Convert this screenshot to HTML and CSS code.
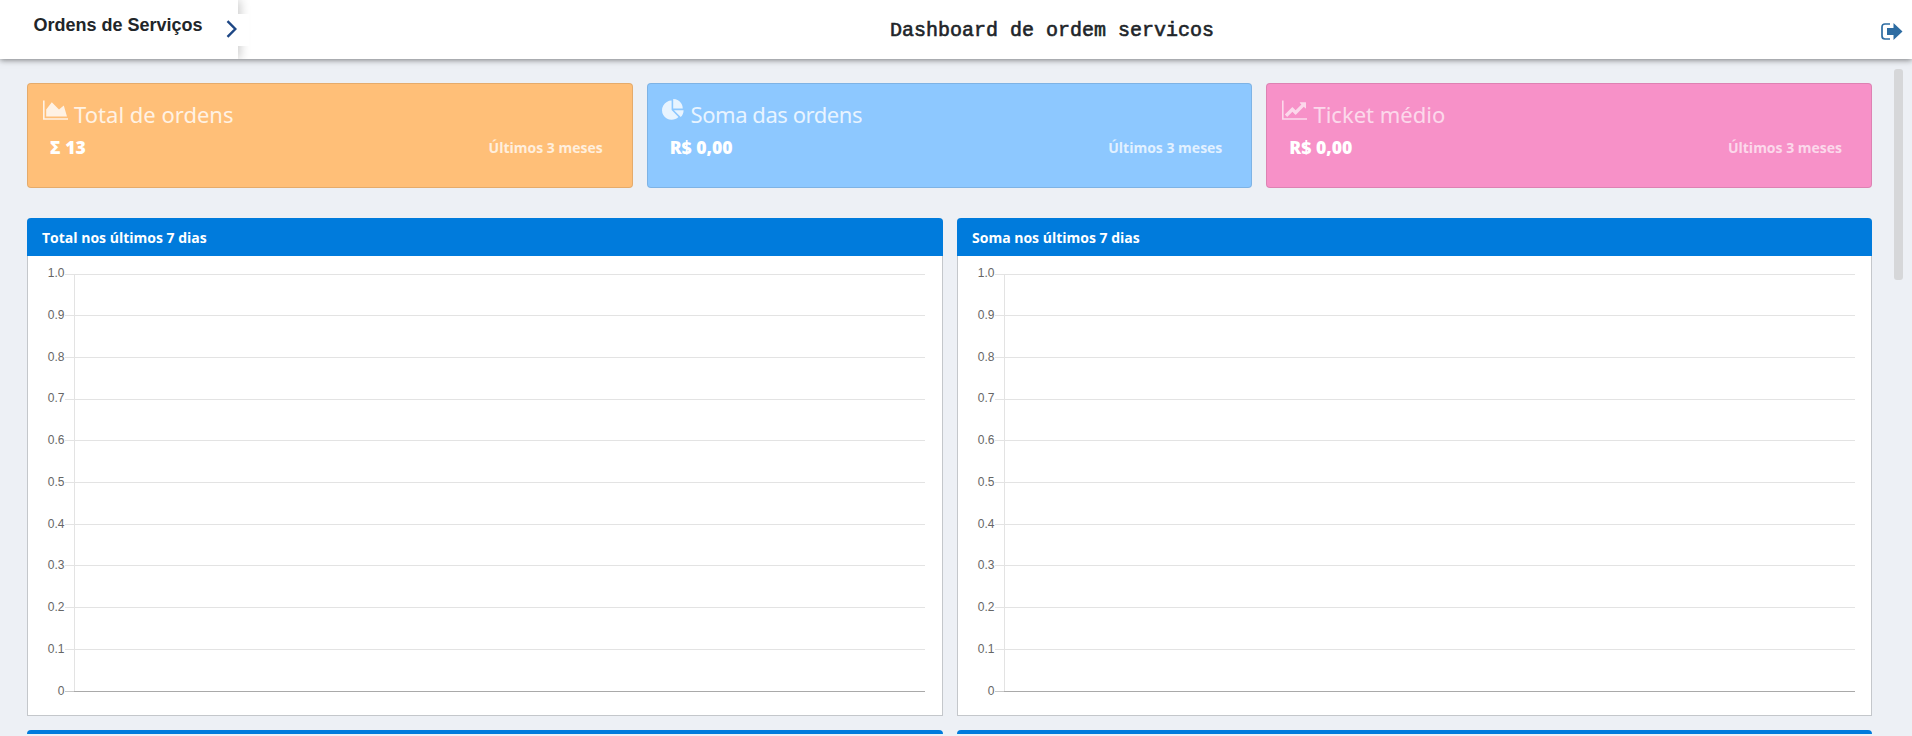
FILE: index.html
```
<!DOCTYPE html>
<html lang="pt-BR">
<head>
<meta charset="utf-8">
<title>Dashboard de ordem servicos</title>
<link rel="stylesheet" href="styles.css">
</head>
<body>
<header class="topbar">
  <div class="brand">Ordens de Serviços
    <span class="tab"><svg width="12" height="18" viewBox="0 0 12 18"><path d="M1.5 1.2L9.3 9L1.5 16.8"/></svg></span>
  </div>
  <h1 class="title">Dashboard de ordem servicos</h1>
  <svg class="logout" width="22" height="18" viewBox="0 0 22 18"><path class="door" d="M9 1H4Q1 1 1 4V13Q1 16 4 16H9"/><path class="arrow" d="M6 5H12.500V0L21.500 8.500L12.500 17V12H6Z"/></svg>
</header>
<main class="content">
  <section class="cards">
    <article class="card orange">
      <div class="head"><svg class="icon wide" viewBox="0 0 2048 1792"><path d="M2048 1536v128h-2048v-1536h128v1408h1920zm-384-1024l256 896h-1664v-576l448-576 576 576z"/></svg><h2 class="name">Total de ordens</h2></div>
      <div class="figures"><strong>Σ 13</strong><span>Últimos 3 meses</span></div>
    </article>
    <article class="card blue">
      <div class="head"><svg class="icon" viewBox="0 0 1792 1792"><path d="M768 890l546 546q-106 108-247.500 168t-298.500 60q-209 0-385.500-103t-279.500-279.500-103-385.500 103-385.500 279.500-279.500 385.500-103v762zm187 6h773q0 157-60 298.500t-168 247.500zm709-128h-768v-768q209 0 385.500 103t279.500 279.500 103 385.500z"/></svg><h2 class="name">Soma das ordens</h2></div>
      <div class="figures"><strong>R$ 0,00</strong><span>Últimos 3 meses</span></div>
    </article>
    <article class="card pink">
      <div class="head"><svg class="icon wide" viewBox="0 0 2048 1792"><path d="M2048 1536v128h-2048v-1536h128v1408h1920zm-128-1248v435q0 21-19.500 29.500t-35.500-7.500l-121-121-633 633q-10 10-23 10t-23-10l-233-233-416 416-192-192 585-585q10-10 23-10t23 10l233 233 464-464-121-121q-16-16-7.500-35.500t29.500-19.500h435q14 0 23 9t9 23z"/></svg><h2 class="name">Ticket médio</h2></div>
      <div class="figures"><strong>R$ 0,00</strong><span>Últimos 3 meses</span></div>
    </article>
  </section>
  <section class="panels">
    <article class="panel">
      <h3>Total nos últimos 7 dias</h3>
      <svg class="chart" width="914" height="459">
        <path class="grid" d="M37 18.500H897M37 59.500H897M37 101.500H897M37 143.500H897M37 184.500H897M37 226.500H897M37 268.500H897M37 309.500H897M37 351.500H897M37 393.500H897M46.500 19V435"/>
        <path class="tick" d="M37 435.500H46"/>
        <path class="base" d="M46 435.500H897"/>
        <g class="labels"><text x="36.500" y="21">1.0</text><text x="36.500" y="63">0.9</text><text x="36.500" y="105">0.8</text><text x="36.500" y="146">0.7</text><text x="36.500" y="188">0.6</text><text x="36.500" y="230">0.5</text><text x="36.500" y="272">0.4</text><text x="36.500" y="313">0.3</text><text x="36.500" y="355">0.2</text><text x="36.500" y="397">0.1</text><text x="36.500" y="439">0</text></g>
      </svg>
    </article>
    <article class="panel">
      <h3>Soma nos últimos 7 dias</h3>
      <svg class="chart" width="913" height="459">
        <path class="grid" d="M37 18.500H897M37 59.500H897M37 101.500H897M37 143.500H897M37 184.500H897M37 226.500H897M37 268.500H897M37 309.500H897M37 351.500H897M37 393.500H897M46.500 19V435"/>
        <path class="tick" d="M37 435.500H46"/>
        <path class="base" d="M46 435.500H897"/>
        <g class="labels"><text x="36.500" y="21">1.0</text><text x="36.500" y="63">0.9</text><text x="36.500" y="105">0.8</text><text x="36.500" y="146">0.7</text><text x="36.500" y="188">0.6</text><text x="36.500" y="230">0.5</text><text x="36.500" y="272">0.4</text><text x="36.500" y="313">0.3</text><text x="36.500" y="355">0.2</text><text x="36.500" y="397">0.1</text><text x="36.500" y="439">0</text></g>
      </svg>
    </article>
    <div class="next"></div>
    <div class="next"></div>
  </section>
  <div class="scroll"></div>
</main>
</body>
</html>
```
FILE: styles.css
```
* { box-sizing: border-box; }
body { margin: 0; height: 736px; overflow: hidden; background: #edf0f5; font-family: "Open Sans", sans-serif; }
h1, h2, h3 { margin: 0; }
svg { display: block; flex: none; }

.topbar { position: relative; z-index: 1; display: flex; align-items: flex-start; height: 59px; background: #fff; box-shadow: 0 1px 6px rgba(0, 0, 0, .5); }
.brand { position: relative; width: 238px; height: 59px; padding: 13px 0 0 33.5px; background: #fff; box-shadow: 2px 0 10px rgba(0, 0, 0, .22); clip-path: inset(0 -14px 0 0); font: bold 18px/24px "Liberation Sans", sans-serif; color: #212529; white-space: nowrap; }
.tab { position: absolute; left: 226px; top: 14px; width: 23px; height: 32px; padding: 6px 0 0 0; background: #fff; }
.tab path { fill: none; stroke: #1e4785; stroke-width: 2.4; }
.title { flex: 1; padding: 19px 0 0 652px; font: 400 20px/24px "Courier New", "Liberation Mono", monospace; -webkit-text-stroke: .6px #212529; color: #212529; white-space: nowrap; }
.logout { margin: 23px 9px 0 0; }
.door { fill: none; stroke: #2d6ca2; stroke-width: 1.7; }
.arrow { fill: #2d6ca2; stroke: #fff; stroke-width: 1; paint-order: stroke; }

.content { position: relative; padding: 24px 40px 0 27px; }
.cards { display: grid; grid-template-columns: repeat(3, 1fr); gap: 14px; }
.card { height: 105px; border: 1px solid rgba(0, 0, 0, .1); border-radius: 4px; padding: 15px 29px 0 14.5px; color: #fff; }
.orange { background-color: #ffbf78; }
.blue { background-color: #8dc8ff; }
.pink { background-color: #f791c8; }
.head { display: flex; gap: 6px; height: 34px; opacity: .8; }
.pink .head { opacity: .65; }
.icon { width: 22.4px; height: 22.4px; fill: #fff; }
.wide { width: 25.6px; }
.name { font: 400 22px/30px "Comic Sans MS", "Noto Sans", sans-serif; white-space: nowrap; }
.blue .name { letter-spacing: -.45px; }
.figures { display: flex; justify-content: space-between; align-items: center; height: 28px; padding-left: 7.5px; font-weight: 700; }
.figures strong { font-size: 17.6px; }
.figures span { font-size: 14px; opacity: .75; }
.pink .figures span { opacity: .65; }

.panels { display: grid; grid-template-columns: 916px 915px; gap: 14px; margin-top: 30px; }
.panel { height: 498px; border: 1px solid #c4c7cb; border-top: 0; border-radius: 4px 4px 0 0; background: #fff; }
.panel h3 { height: 38px; margin: 0 -1px; padding-left: 15px; border-radius: 4px 4px 0 0; background: #007bdc; color: #fff; font-size: 14px; line-height: 39px; }
.chart { overflow: hidden; }
.grid { stroke: #e3e3e3; fill: none; }
.tick { stroke: #c6c6c6; }
.base { stroke: #a9a9a9; }
.labels { font: 12px "Liberation Sans", sans-serif; fill: #666; text-anchor: end; }
.next { height: 4px; border-radius: 4px 4px 0 0; background: #007bdc; }
.scroll { position: absolute; top: 10px; right: 9px; width: 9px; height: 211px; border-radius: 3px; background: #d6d7d9; }
```
